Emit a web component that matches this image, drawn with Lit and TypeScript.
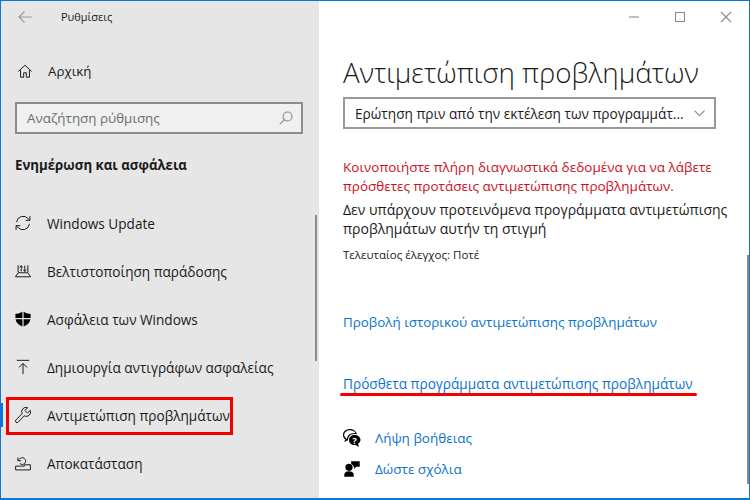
import { LitElement, html, css, svg } from "lit";
import { customElement } from "lit/decorators.js";

const icons = {
  home: svg`<path d="M1.500 9.500 9 2.500l7.500 7M4 8v8h3.500v-5h3v5H14V8"/>`,
  update: svg`<path d="M1.800 8A7.300 7.300 0 0 1 14.800 4.200L16.800 6M16.200 10A7.300 7.300 0 0 1 3.200 13.800L1.200 12"/><path d="M16.800 1.200V6H12M1.200 16.800V12H6"/>`,
  delivery: svg`<path d="M3.500 10.500V2.500M14.500 2.500v8M.5 15.500h17l-3-4.500h-11ZM7 9.500V3M5.200 5 7 3l1.800 2M11 3v6.500M9.200 7.500l1.800 2 1.800-2"/>`,
  up: svg`<path d="M2 1.500h14M9 17V5M4.500 9.500 9 5l4.500 4.500"/>`,
  wrench: svg`<path d="M.9 14.700 8 7.600A4.900 4.900 0 0 1 14.200.8L11.200 4l2.800 2.800 3.200-3A4.900 4.900 0 0 1 10.400 10L3.500 17a1.700 1.700 0 0 1-2.600-2.300Z"/>`,
  restore: svg`<path d="M.7 12.500h9.800v-1.500h6.800v5.800H.7ZM5.500 9.500A3.800 3.800 0 1 0 5 4.800L3.200 6.500M3.200 2.800v3.700h3.700"/>`,
};

@customElement("app-root")
export class AppRoot extends LitElement {
  static styles = css`
    :host {
      display: block;
      width: 750px;
      height: 500px;
      font-family: "Open Sans", "Noto Sans", sans-serif;
      color: #1a1a1a;
    }
    .window {
      position: relative;
      box-sizing: border-box;
      width: 750px;
      height: 500px;
      border: solid #0a78d4;
      border-width: 1px 1px 2px 1px;
      display: flex;
      overflow: hidden;
      background: #fff;
    }
    svg {
      display: block;
      fill: none;
      stroke: currentColor;
      stroke-width: 1.1;
      flex: none;
    }
    .side {
      position: relative;
      width: 318px;
      background: #e6e6e6;
      display: flex;
      flex-direction: column;
    }
    .titlebar {
      height: 31px;
      display: flex;
      align-items: center;
      padding-left: 16px;
      gap: 28px;
      font-size: 11px;
    }
    .back { color: #999; }
    .home {
      margin-top: 19px;
      height: 40px;
      display: flex;
      align-items: center;
      gap: 15px;
      padding-left: 16px;
      font-size: 13.300px;
    }
    .search {
      box-sizing: border-box;
      margin: 11px 0 0 14px;
      width: 288px;
      height: 32px;
      border: 2px solid #8c8c8c;
      background: #f0f0f0;
      color: #6d6d6d;
      font-size: 13.400px;
      display: flex;
      align-items: center;
      justify-content: space-between;
      padding: 0 8px 0 10px;
    }
    .search svg { color: #888; }
    .section {
      margin: 21px 0 0 14px;
      height: 20px;
      line-height: 20px;
      font-size: 13.250px;
      font-weight: 700;
    }
    nav {
      margin-top: 24px;
      display: flex;
      flex-direction: column;
    }
    .item {
      position: relative;
      height: 48px;
      display: flex;
      align-items: center;
      gap: 16px;
      padding-left: 14px;
      font-size: 13.600px;
      white-space: nowrap;
    }
    .item.active::before {
      content: "";
      position: absolute;
      left: 0;
      top: 12px;
      width: 2px;
      height: 24px;
      background: #0a78d4;
    }
    .mark {
      position: absolute;
      box-sizing: border-box;
      left: 5px;
      top: 396px;
      width: 227px;
      height: 38px;
      border: 3px solid #f00000;
    }
    .sbar {
      position: absolute;
      width: 2px;
      background: #8a8a8a;
    }
    .sbar.a { left: 314px; top: 214px; height: 146px; }
    .sbar.b { left: 746px; top: 254px; height: 229px; }
    main {
      flex: 1;
      min-width: 0;
      padding-left: 24px;
      display: flex;
      flex-direction: column;
    }
    .controls {
      height: 31px;
      display: flex;
      justify-content: flex-end;
      color: #8c8c8c;
      align-items: center;
    }
    .controls div {
      width: 46px;
      display: flex;
      justify-content: center;
    }
    h1 {
      margin: 18px 0 0;
      font-size: 27.750px;
      font-weight: 300;
      line-height: 44px;
      height: 47px;
      white-space: nowrap;
    }
    .select {
      box-sizing: border-box;
      width: 373px;
      height: 32px;
      border: 2px solid #999;
      display: flex;
      align-items: center;
      justify-content: space-between;
      padding: 0 9px 0 10px;
      font-size: 13.650px;
      white-space: nowrap;
    }
    .select svg { color: #888; }
    .warn {
      margin: 29px 0 0;
      color: #cc0f1a;
      font-size: 13.500px;
      line-height: 19px;
      white-space: nowrap;
    }
    .info {
      margin: 4px 0 0;
      font-size: 14px;
      line-height: 19px;
      white-space: nowrap;
    }
    .checked {
      margin: 9px 0 0;
      font-size: 11.500px;
      line-height: 16px;
    }
    .link {
      color: #0a74cf;
      font-size: 13.500px;
      line-height: 20px;
      white-space: nowrap;
    }
    .l1 { margin-top: 49px; font-size: 13.400px; }
    .l2 { margin-top: 42px; font-size: 13.650px; }
    .underline {
      position: absolute;
      left: 339px;
      top: 392px;
      width: 357px;
      height: 3px;
      border-radius: 2px;
      background: #f00000;
    }
    .help {
      margin-top: 34px;
      display: flex;
      flex-direction: column;
      gap: 11px;
    }
    .help-row {
      display: flex;
      align-items: center;
      gap: 14px;
    }
    .help-row svg { stroke: none; fill: #000; }
  `;

  private icon(path: unknown, size = 16) {
    return html`<svg width=${size} height=${size} viewBox="0 0 18 18">${path}</svg>`;
  }

  render() {
    const items: [string, unknown, boolean?][] = [
      ["Windows Update", icons.update],
      ["Βελτιστοποίηση παράδοσης", icons.delivery],
      ["Ασφάλεια των Windows", null],
      ["Δημιουργία αντιγράφων ασφαλείας", icons.up],
      ["Αντιμετώπιση προβλημάτων", icons.wrench, true],
      ["Αποκατάσταση", icons.restore],
    ];
    return html`
      <div class="window">
        <aside class="side">
          <div class="titlebar">
            <svg class="back" width="16" height="14" viewBox="0 0 16 14"><path d="M15 7H2M7.500 1.500 2 7l5.500 5.500"/></svg>
            <span>Ρυθμίσεις</span>
          </div>
          <div class="home">${this.icon(icons.home)}<span>Αρχική</span></div>
          <div class="search">
            <span>Αναζήτηση ρύθμισης</span>
            <svg width="14" height="14" viewBox="0 0 14 14"><circle cx="8.500" cy="5.500" r="4.500"/><path d="M5.200 8.800.8 13.200"/></svg>
          </div>
          <div class="section">Ενημέρωση και ασφάλεια</div>
          <nav>
            ${items.map(([label, path, active]) => html`
              <div class="item ${active ? "active" : ""}">
                ${path
                  ? this.icon(path)
                  : html`<svg width="16" height="16" viewBox="0 0 18 18" style="fill:#000;stroke:none"><path d="M9.700 .8c2 1.400 4.700 2.300 7.800 2.300V8H9.700ZM8.300 .8V8H.5V3.100C3.600 3.100 6.300 2.200 8.300 .8ZM.6 9.300h7.700v8.200C4.300 16 1.300 13.300.6 9.300ZM9.700 9.300h7.700c-.7 4-3.700 6.700-7.700 8.200Z"/></svg>`}
                <span>${label}</span>
              </div>
            `)}
          </nav>
        </aside>
        <main>
          <div class="controls">
            <div><svg width="12" height="12" viewBox="0 0 12 12"><path d="M1 6h10"/></svg></div>
            <div><svg width="12" height="12" viewBox="0 0 12 12"><rect x="1.500" y="1.500" width="9" height="9"/></svg></div>
            <div><svg width="12" height="12" viewBox="0 0 12 12"><path d="m1 1 10 10M11 1 1 11"/></svg></div>
          </div>
          <h1>Αντιμετώπιση προβλημάτων</h1>
          <div class="select">
            <span>Ερώτηση πριν από την εκτέλεση των προγραμμάτ...</span>
            <svg width="11" height="7" viewBox="0 0 11 7"><path d="m.5.7 5 5 5-5"/></svg>
          </div>
          <p class="warn">Κοινοποιήστε πλήρη διαγνωστικά δεδομένα για να λάβετε<br />πρόσθετες προτάσεις αντιμετώπισης προβλημάτων.</p>
          <p class="info">Δεν υπάρχουν προτεινόμενα προγράμματα αντιμετώπισης<br />προβλημάτων αυτήν τη στιγμή</p>
          <div class="checked">Τελευταίος έλεγχος: Ποτέ</div>
          <div class="link l1">Προβολή ιστορικού αντιμετώπισης προβλημάτων</div>
          <div class="link l2">Πρόσθετα προγράμματα αντιμετώπισης προβλημάτων</div>
          <div class="help">
            <div class="help-row">
              <svg width="18" height="18" viewBox="0 0 18 18"><path fill-rule="evenodd" d="M7 0C3 0 0 2.500 0 6c0 2 1 3.500 2.500 4.500L1 13l4-1.800C5 8 7 5 11 5h3C13 2 10.500 0 7 0ZM7 1.200c2.500 0 4.700 1.200 5.500 2.700H11C7 4 4 6.500 4 9.800L3 10.300l.5-1C2 8.500 1.200 7.400 1.200 6 1.200 3.300 3.800 1.200 7 1.200Z"/><path d="M11.500 6C8.500 6 6 8 6 11s2.500 5 5.500 5l1 0L16 18l-1-3.200c1.500-1 2.500-2.300 2.500-3.800 0-3-2.500-5-6-5Z"/><text x="11.700" y="14.500" font-size="9" font-weight="700" text-anchor="middle" fill="#fff" font-family="Open Sans">?</text></svg>
              <span class="link">Λήψη βοήθειας</span>
            </div>
            <div class="help-row">
              <svg width="18" height="18" viewBox="-1.500 -0.500 21 19"><circle cx="5.500" cy="7" r="4.200"/><path d="M0 18v-2.500C0 13 2 11.500 5.500 11.500S11 13 11 15.500V18ZM8 0h10v6.500h-4L11.500 9V6.800C10.500 5.500 9.500 4 8 3Z"/></svg>
              <span class="link">Δώστε σχόλια</span>
            </div>
          </div>
        </main>
        <div class="mark"></div>
        <div class="underline"></div>
        <div class="sbar a"></div>
        <div class="sbar b"></div>
      </div>
    `;
  }
}
